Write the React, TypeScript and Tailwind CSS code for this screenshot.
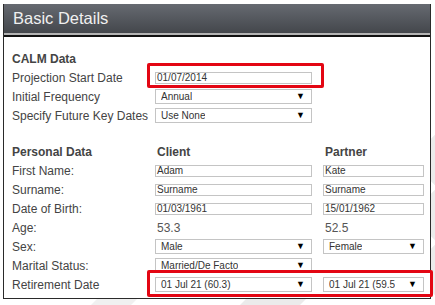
const labelCls = "w-[143px] shrink-0 text-[12px] text-[#444]";

function TextBox({ value, wide }: { value: string; wide?: boolean }) {
  return (
    <div
      className={`${wide ? "w-[157px]" : "w-[101px]"} h-[12px] border border-[#c4c4c4] bg-white pl-[1px] flex items-center text-[10px] leading-none text-[#333]`}
    >
      {value}
    </div>
  );
}

function Select({ value, wide, clip }: { value: string; wide?: boolean; clip?: boolean }) {
  return (
    <div
      className={`${wide ? "w-[157px]" : "w-[101px]"} h-[15px] border border-[#c4c4c4] bg-white pl-[5px] pr-[6px] flex items-center justify-between text-[10px] leading-none text-[#333] overflow-hidden`}
    >
      <span className={`whitespace-nowrap overflow-hidden ${clip ? "w-[66px]" : ""}`}>{value}</span>
      <span className="text-[9px] text-black shrink-0 ml-[3px]">▼</span>
    </div>
  );
}

function Row({ label, children }: { label: string; children?: React.ReactNode }) {
  return (
    <div className="h-[19px] flex items-center">
      <div className={labelCls}>{label}</div>
      {children}
    </div>
  );
}

export default function App() {
  return (
    <div
      className="relative w-[435px] h-[305px] overflow-hidden bg-white"
      style={{ fontFamily: '"Liberation Sans", Arial, sans-serif' }}
    >
      {/* watermark behind the panel */}
      <div className="absolute left-[418px] top-[140px] w-[40px] h-[40px] bg-[#ebebeb] rotate-45" />
      <div className="absolute left-[418px] top-[195px] w-[40px] h-[40px] bg-[#ebebeb] rotate-45" />
      <div className="absolute left-[418px] top-[250px] w-[40px] h-[40px] bg-[#ebebeb] rotate-45" />
      <div className="absolute left-[240px] top-[290px] w-[60px] h-[30px] bg-[#ebebeb] -skew-x-45" />
      <div className="absolute left-[90px] top-[296px] w-[40px] h-[20px] bg-[#f0f0f0] -skew-x-45" />

      <div className="relative ml-[3px] mt-[4px] w-[428px] border-x border-b border-[#2a2a2a] bg-white">
        {/* header */}
        <div className="h-[29px] bg-linear-to-b from-[#666a71] to-[#44474c] flex items-center pl-[9px] text-[16.5px] text-[#f0f0f0]">
          Basic Details
        </div>
        <div className="h-[2px] bg-[#b4b4b4]" />
        <div className="h-[2px] bg-[#111]" />

        <div className="pl-[8px] pt-[12px] pb-[4px]">
          <div className="h-[19px] flex items-center text-[12px] font-bold text-[#444]">CALM Data</div>
          <Row label="Projection Start Date">
            <TextBox value="01/07/2014" wide />
          </Row>
          <Row label="Initial Frequency">
            <Select value="Annual" wide />
          </Row>
          <Row label="Specify Future Key Dates">
            <Select value="Use None" wide />
          </Row>

          <div className="h-[17px]" />

          <div className="h-[19px] flex items-center text-[12px] font-bold text-[#444]">
            <div className="w-[143px] shrink-0">Personal Data</div>
            <div className="w-[168px] shrink-0 pl-[2px]">Client</div>
            <div className="pl-[2px]">Partner</div>
          </div>
          <Row label="First Name:">
            <TextBox value="Adam" wide />
            <div className="w-[11px]" />
            <TextBox value="Kate" />
          </Row>
          <Row label="Surname:">
            <TextBox value="Surname" wide />
            <div className="w-[11px]" />
            <TextBox value="Surname" />
          </Row>
          <Row label="Date of Birth:">
            <TextBox value="01/03/1961" wide />
            <div className="w-[11px]" />
            <TextBox value="15/01/1962" />
          </Row>
          <Row label="Age:">
            <div className="w-[168px] shrink-0 pl-[2px] text-[12px] text-[#555]">53.3</div>
            <div className="pl-[2px] text-[12px] text-[#555]">52.5</div>
          </Row>
          <Row label="Sex:">
            <Select value="Male" wide />
            <div className="w-[11px]" />
            <Select value="Female" />
          </Row>
          <Row label="Marital Status:">
            <Select value="Married/De Facto" wide />
          </Row>
          <Row label="Retirement Date">
            <Select value="01 Jul 21 (60.3)" wide />
            <div className="w-[11px]" />
            <Select value="01 Jul 21 (59.5)" clip />
          </Row>
        </div>
      </div>

      {/* red highlight boxes */}
      <div className="absolute left-[147px] top-[63px] w-[177px] h-[25px] border-[3px] border-[#e30613] rounded-[2px]" />
      <div className="absolute left-[147px] top-[270px] w-[286px] h-[27px] border-[3px] border-[#e30613] rounded-[2px]" />
    </div>
  );
}
